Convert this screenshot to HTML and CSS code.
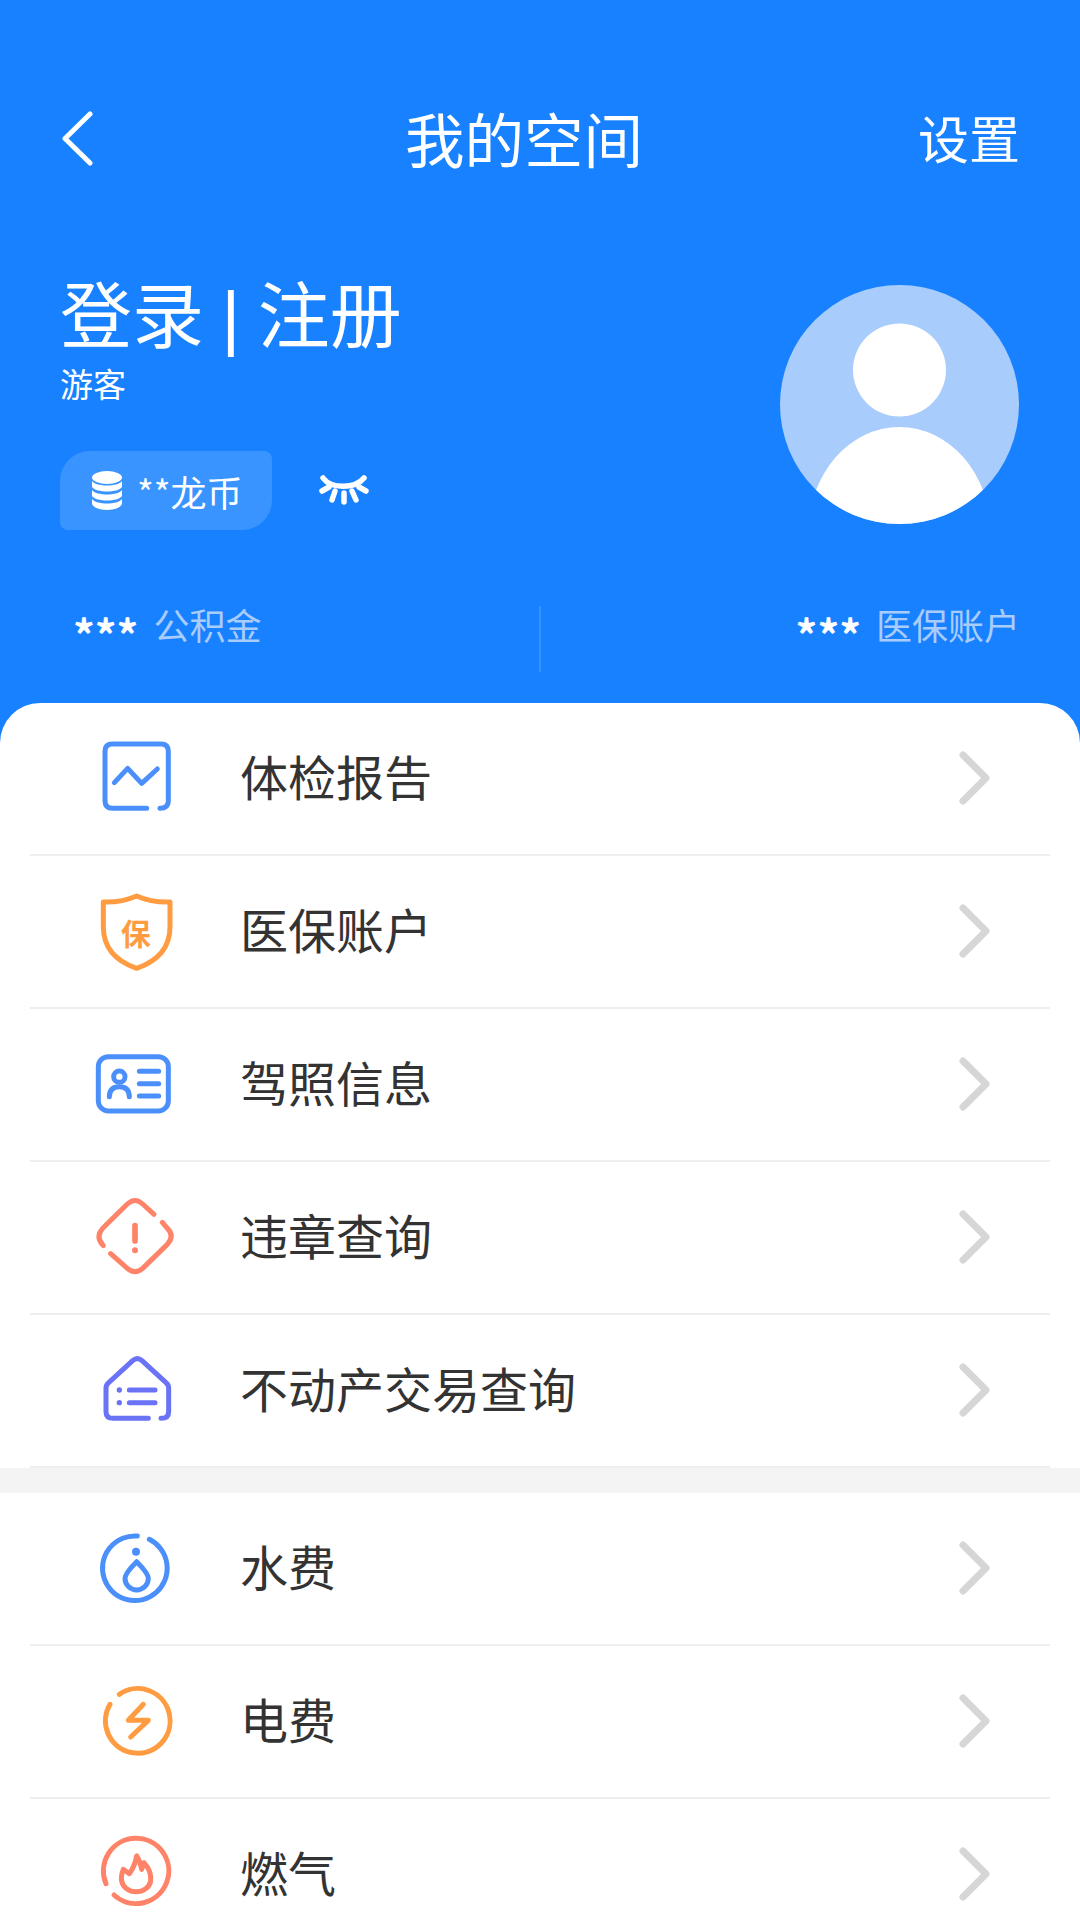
FILE: index.html
```html
<!DOCTYPE html>
<html lang="zh-CN">
<head>
  <meta charset="UTF-8">
  <title>我的空间</title>
  <link rel="stylesheet" href="styles.css">
</head>
<body>

<section class="hero">
  <div class="nav">
    <div class="nav-back">
      <svg width="34" height="58" viewBox="0 0 34 58"><path d="M30 3 L5 27.500 L30 52" class="line-white"/></svg>
    </div>
    <div class="nav-title">我的空间</div>
    <div class="nav-action">设置</div>
  </div>

  <div class="profile">
    <div class="profile-left">
      <div class="login-text">登录<span class="login-bar"> | </span>注册</div>
      <div class="guest-text">游客</div>
      <div class="coin-row">
        <div class="coin-pill">
          <svg width="32" height="40" viewBox="0 0 32 40">
            <ellipse cx="16" cy="6.500" rx="15" ry="6.500" fill="#fff"/>
            <path d="M1 10 C5 16 27 16 31 10 V16 C27 22 5 22 1 16 Z" fill="#fff"/>
            <path d="M1 19 C5 25 27 25 31 19 V25 C27 31 5 31 1 25 Z" fill="#fff"/>
            <path d="M1 28 C5 34 27 34 31 28 V33 C27 41 5 41 1 33 Z" fill="#fff"/>
          </svg>
          <span>**龙币</span>
        </div>
        <svg class="eye" width="50" height="30" viewBox="0 0 50 30">
          <path d="M4 3 C12 14 36 14 45 3" class="line-eye"/>
          <path d="M3 16 L10 12 M13 25 L16 16 M25 27 V18 M37 25 L33 16 M47 16 L40 12" class="line-eye"/>
        </svg>
      </div>
    </div>
    <svg class="avatar" width="239" height="239" viewBox="0 0 239 239">
      <clipPath id="avatarClip"><circle cx="119.500" cy="119.500" r="119.500"/></clipPath>
      <circle cx="119.500" cy="119.500" r="119.500" fill="#a8ccfb"/>
      <circle cx="119.500" cy="85" r="46.500" fill="#fff"/>
      <ellipse cx="119.500" cy="247" rx="91" ry="105" fill="#fff" clip-path="url(#avatarClip)"/>
    </svg>
  </div>

  <div class="stats">
    <div class="stat stat-left"><b>***</b><span>公积金</span></div>
    <div class="stat-divider"></div>
    <div class="stat stat-right"><b>***</b><span>医保账户</span></div>
  </div>
</section>

<main class="list">
  <div class="group">
    <div class="row">
      <svg class="row-icon" viewBox="0 -6 360 360">
        <path d="M200 265 H97 Q75 265 75 243 V94 Q75 72 97 72 H243 Q265 72 265 94 V243 Q265 265 240 265" class="ic blue"/>
        <path d="M103 188 L143 145 L185 190 L232 147" class="ic blue"/>
      </svg>
      <span class="row-label">体检报告</span>
      <svg class="row-arrow" width="32" height="56" viewBox="0 0 32 56"><path d="M5 5 L28 28 L5 51" class="line-arrow"/></svg>
    </div>
    <div class="row">
      <svg class="row-icon" viewBox="0 3 360 360">
        <path d="M170 78 Q215 98 270 96 V170 Q270 260 170 295 Q70 260 70 170 V96 Q125 98 170 78 Z" class="ic orange"/>
        <text x="167" y="224" class="shield-text">保</text>
      </svg>
      <span class="row-label">医保账户</span>
      <svg class="row-arrow" width="32" height="56" viewBox="0 0 32 56"><path d="M5 5 L28 28 L5 51" class="line-arrow"/></svg>
    </div>
    <div class="row">
      <svg class="row-icon" viewBox="0 -3 360 360">
        <rect x="55" y="95" width="210" height="163" rx="30" class="ic blue"/>
        <circle cx="118" cy="155" r="17" class="ic blue"/>
        <path d="M88 215 Q88 185 118 185 Q148 185 148 215" class="ic blue"/>
        <path d="M178 139 H236 M178 176 H236 M178 213 H236" class="ic blue"/>
      </svg>
      <span class="row-label">驾照信息</span>
      <svg class="row-arrow" width="32" height="56" viewBox="0 0 32 56"><path d="M5 5 L28 28 L5 51" class="line-arrow"/></svg>
    </div>
    <div class="row">
      <svg class="row-icon" viewBox="0 6 360 360">
        <path d="M222 118 L188 87 Q165 66 142 87 L68 160 Q45 185 70 212" class="ic red"/>
        <path d="M92 236 L142 280 Q165 300 188 280 L262 208 Q285 182 262 160 L247 142" class="ic red"/>
        <path d="M165 152 V198" class="ic red thick"/>
        <circle cx="165" cy="226" r="9" class="dot-red"/>
      </svg>
      <span class="row-label">违章查询</span>
      <svg class="row-arrow" width="32" height="56" viewBox="0 0 32 56"><path d="M5 5 L28 28 L5 51" class="line-arrow"/></svg>
    </div>
    <div class="row">
      <svg class="row-icon" viewBox="0 0 360 360">
        <path d="M205 265 H100 Q78 265 78 245 V174 Q78 165 86 158 L158 92 Q172 80 186 92 L258 158 Q266 165 266 174 V245 Q266 265 243 265" class="ic violet"/>
        <circle cx="118" cy="180" r="8" class="dot-violet"/>
        <circle cx="118" cy="218" r="8" class="dot-violet"/>
        <path d="M148 180 H225 M148 218 H225" class="ic violet"/>
      </svg>
      <span class="row-label">不动产交易查询</span>
      <svg class="row-arrow" width="32" height="56" viewBox="0 0 32 56"><path d="M5 5 L28 28 L5 51" class="line-arrow"/></svg>
    </div>
  </div>

  <div class="group-gap"></div>

  <div class="group">
    <div class="row">
      <svg class="row-icon" viewBox="0 -6 360 360">
        <path d="M172 78 A97 97 0 1 0 208 88" class="ic blue"/>
        <circle cx="168" cy="125" r="12" class="dot-blue"/>
        <path d="M170 155 Q205 190 205 205 A35 35 0 0 1 135 205 Q135 190 170 155 Z" class="ic blue"/>
      </svg>
      <span class="row-label">水费</span>
      <svg class="row-arrow" width="32" height="56" viewBox="0 0 32 56"><path d="M5 5 L28 28 L5 51" class="line-arrow"/></svg>
    </div>
    <div class="row">
      <svg class="row-icon" viewBox="0 0 360 360">
        <path d="M118 100 A97 97 0 1 1 90 130" class="ic orange"/>
        <path d="M190 130 L145 178 H205 L152 228" class="ic orange"/>
      </svg>
      <span class="row-label">电费</span>
      <svg class="row-arrow" width="32" height="56" viewBox="0 0 32 56"><path d="M5 5 L28 28 L5 51" class="line-arrow"/></svg>
    </div>
    <div class="row">
      <svg class="row-icon" viewBox="0 9 360 360">
        <path d="M102 252 A98 98 0 1 0 78 218" class="ic red"/>
        <path d="M170 135 Q165 165 148 188 L130 175 Q122 195 125 210 A44 38 0 0 0 212 210 Q215 180 192 155 L185 175 Q180 150 170 135 Z" class="ic red"/>
      </svg>
      <span class="row-label">燃气</span>
      <svg class="row-arrow" width="32" height="56" viewBox="0 0 32 56"><path d="M5 5 L28 28 L5 51" class="line-arrow"/></svg>
    </div>
  </div>
</main>

</body>
</html>
```

FILE: styles.css
```css
body {
  font-family: "Noto Sans CJK SC", "Noto Sans", sans-serif;
  background: white;
  margin: 0;
  padding: 0;
  height: 1920px;
  overflow: hidden;
}

svg {
  display: block;
}

.line-white {
  fill: none;
  stroke: white;
  stroke-width: 5;
  stroke-linecap: round;
  stroke-linejoin: round;
}

.line-eye {
  fill: none;
  stroke: white;
  stroke-width: 5.500;
  stroke-linecap: round;
}

.line-arrow {
  fill: none;
  stroke: #d6d6d6;
  stroke-width: 7;
  stroke-linecap: round;
  stroke-linejoin: round;
}

/* blue header */
.hero {
  background: #1781ff;
  color: white;
  height: 743px;
  padding: 105px 60px 0;
  box-sizing: border-box;
}

.nav {
  display: flex;
  align-items: center;
  height: 70px;
}

.nav-back {
  width: 70px;
}

.nav-title {
  flex: 1;
  text-align: center;
  font-size: 59.500px;
  line-height: 70px;
  margin-bottom: 7px;
}

.nav-action {
  font-size: 51px;
  line-height: 70px;
  margin-bottom: 7px;
}

.profile {
  display: flex;
  justify-content: space-between;
  margin-top: 110px;
  padding-right: 1px;
}

.login-text {
  font-size: 72px;
  line-height: 68px;
  margin-top: -8px;
}

.login-bar {
  font-family: "Liberation Sans", sans-serif;
  white-space: pre;
  word-spacing: -2.500px;
}

.guest-text {
  font-size: 33px;
  line-height: 40px;
  margin-top: 12px;
}

.coin-row {
  display: flex;
  align-items: center;
  margin-top: 48px;
}

.coin-pill {
  display: flex;
  align-items: center;
  width: 212px;
  height: 79px;
  padding-left: 31px;
  box-sizing: border-box;
  background: #3a94ff;
  border-radius: 30px 8px 30px 8px;
  font-size: 36px;
}

.coin-pill span {
  margin-left: 14px;
}

.eye {
  margin-left: 47px;
  margin-top: -2px;
}

.stats {
  display: flex;
  align-items: center;
  height: 66px;
  margin-top: 76px;
}

.stat {
  flex: 1;
  display: flex;
  align-items: center;
  font-size: 36px;
  color: #a8ccfb;
  margin-bottom: 30px;
}

.stat b {
  font-size: 43px;
  line-height: 50px;
  color: white;
  margin: 18px 15px 0 0;
}

.stat-left {
  padding-left: 13px;
}

.stat-right {
  justify-content: flex-end;
  padding-left: 13px;
}

.stat-divider {
  width: 2px;
  height: 66px;
  background: rgba(255, 255, 255, 0.15);
}

/* white list */
.list {
  background: white;
  border-radius: 40px 40px 0 0;
  margin-top: -40px;
  position: relative;
}

.group {
  padding: 0 30px;
}

.group-gap {
  height: 25px;
  background: #f4f4f4;
}

.row {
  display: flex;
  align-items: center;
  height: 153px;
  box-sizing: border-box;
  padding: 0 60px 2px 50px;
  border-bottom: 2px solid #eeeeee;
}

.row-icon {
  width: 120px;
  height: 120px;
  flex-shrink: 0;
}

.row-label {
  flex: 1;
  margin: 0 0 5px 40px;
  font-size: 48px;
  color: #333;
}

.ic {
  fill: none;
  stroke-width: 15;
  stroke-linecap: round;
  stroke-linejoin: round;
}

.thick {
  stroke-width: 17;
}

.blue { stroke: #4b90fa; }
.orange { stroke: #ff9c42; }
.red { stroke: #ff8368; }
.violet { stroke: #6a72f5; }

.dot-blue { fill: #4b90fa; }
.dot-red { fill: #ff8368; }
.dot-violet { fill: #6a72f5; }

.shield-text {
  font-size: 90px;
  font-weight: 700;
  fill: #ff9c42;
  text-anchor: middle;
}
```
